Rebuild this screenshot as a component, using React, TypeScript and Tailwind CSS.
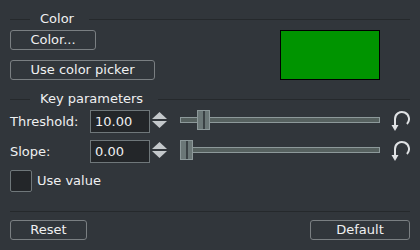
import type { ReactNode } from 'react'

function GroupTitle({ title, className = '' }: { title: string; className?: string }) {
  return (
    <div className={`flex h-4 items-center ${className}`}>
      <div className="h-px w-[20px] bg-[#25292c]" />
      <span className="ml-[10px] mr-[15px] whitespace-nowrap">{title}</span>
      <div className="h-px flex-1 bg-[#25292c]" />
    </div>
  )
}

function Btn({ children, className = '' }: { children: ReactNode; className?: string }) {
  return (
    <button className={`flex h-[20px] items-center justify-center rounded-[3px] border border-[#7a7f82] bg-[#31363b] ${className}`}>
      {children}
    </button>
  )
}

function Spinner() {
  return (
    <svg width="15" height="23" viewBox="0 0 15 23" className="ml-[2px] shrink-0">
      <polygon points="7.5,2 15,9 0,9" fill="#c4c8cb" />
      <polygon points="0,11 15,11 7.5,18" fill="#c4c8cb" />
    </svg>
  )
}

function Slider({ offset }: { offset: number }) {
  return (
    <div className="relative ml-[13px] h-[23px] w-[200px] shrink-0">
      <div className="absolute left-0 right-0 top-[7px] h-[6px] border border-[#8d999a] bg-[#56615f]" />
      <div
        className="absolute top-0 flex h-[20px] w-[13px] border border-[#8d999a] bg-[#6b7777]"
        style={{ left: offset }}
      >
        <div className="flex-1" />
        <div className="w-[2px] bg-[#3a4144]" />
        <div className="flex-1" />
      </div>
    </div>
  )
}

function ResetIcon() {
  return (
    <svg width="20" height="23" viewBox="0 0 20 23" className="ml-[10px] shrink-0">
      <path d="M16.95 13.95 A7 7 0 1 0 5 9 V15" fill="none" stroke="#dfe2e4" strokeWidth="2" />
      <polygon points="1.5,15 8.5,15 5,21" fill="#dfe2e4" />
    </svg>
  )
}

function ParamRow({ label, value, offset, className = '' }: { label: string; value: string; offset: number; className?: string }) {
  return (
    <div className={`flex h-[23px] items-center ${className}`}>
      <span className="w-[80px]">{label}</span>
      <div className="flex h-[23px] w-[60px] shrink-0 items-center border border-[#6f777a] bg-[#232629] px-[4px]">
        {value}
      </div>
      <Spinner />
      <Slider offset={offset} />
      <ResetIcon />
    </div>
  )
}

export default function App() {
  return (
    <div className="flex h-[250px] w-[420px] flex-col bg-[#31363b] px-[10px] pt-[11px] font-['DejaVu_Sans',sans-serif] text-[13px] leading-4 text-[#eff0f1]">
      <GroupTitle title="Color" />
      <div className="mt-[3px] flex h-[50px]">
        <div className="flex flex-col gap-[10px]">
          <Btn className="w-[86px]">Color...</Btn>
          <Btn className="w-[145px]">Use color picker</Btn>
        </div>
        <div className="ml-auto mr-[30px] h-[50px] w-[100px] border border-black bg-[#009400]" />
      </div>

      <GroupTitle title="Key parameters" className="mt-[11px]" />
      <ParamRow label="Threshold:" value="10.00" offset={17} className="mt-[3px]" />
      <ParamRow label="Slope:" value="0.00" offset={0} className="mt-[7px]" />
      <div className="mt-[7px] flex h-[22px] items-center">
        <div className="h-[22px] w-[22px] rounded-[2px] border border-[#6f777a] bg-[#232629]" />
        <span className="ml-[5px]">Use value</span>
      </div>

      <div className="mt-[19px] h-px bg-[#25292c]" />
      <div className="mt-[8px] flex justify-between">
        <Btn className="w-[77px]">Reset</Btn>
        <Btn className="w-[100px]">Default</Btn>
      </div>
    </div>
  )
}
